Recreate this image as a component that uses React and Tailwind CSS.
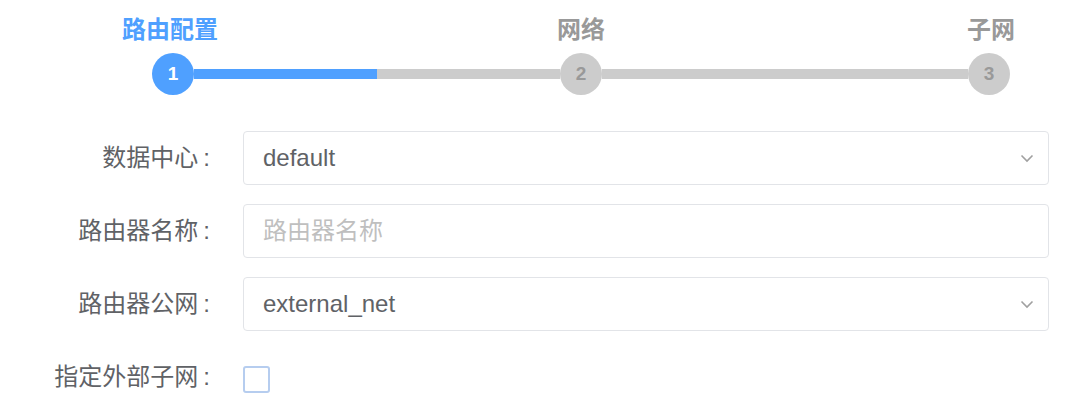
import React from "react";

const cjk = { fontFamily: '"Liberation Sans", "Noto Sans CJK SC", sans-serif' };

function Step({ label, num, active, shift }) {
  return (
    <div className="flex flex-col items-center w-[42px] shrink-0">
      <div
        className={
          "whitespace-nowrap text-[24px] leading-[24px] font-bold mb-[11px] " +
          shift +
          " " +
          (active ? "text-[#4fa0ff]" : "text-[#999999]")
        }
      >
        {label}
      </div>
      <div
        className={
          "w-[42px] h-[42px] rounded-full flex items-center justify-center text-[19px] font-bold " +
          (active ? "bg-[#4fa0ff] text-white" : "bg-[#cccccc] text-[#999999]")
        }
      >
        {num}
      </div>
    </div>
  );
}

function Chevron() {
  return (
    <svg width="14" height="9" viewBox="0 0 14 9" className="shrink-0">
      <polyline points="1.5,1.5 7,7 12.5,1.5" fill="none" stroke="#a0a0a0" strokeWidth="1.6" />
    </svg>
  );
}

function Label({ text }) {
  return (
    <div className="w-[243px] shrink-0 pr-[33px] flex justify-end items-center text-[24px] text-[#606266]">
      <span>{text}</span>
      <span className="ml-[5px]">:</span>
    </div>
  );
}

function Row({ label, children }) {
  return (
    <div className="flex items-center h-[54px]">
      <Label text={label} />
      {children}
    </div>
  );
}

function Box({ children }) {
  return (
    <div className="flex-1 h-[54px] border border-[#e2e4e8] rounded-[4px] bg-white flex items-center justify-between pl-[19px] pr-[14px] text-[24px]">
      {children}
    </div>
  );
}

export default function App() {
  return (
    <div className="w-[1092px] h-[420px] bg-white overflow-hidden" style={cjk}>
      <div className="pt-[18px] pl-[152px] w-[1010px]">
        <div className="flex items-end">
          <Step label="路由配置" num="1" active shift="-translate-x-[3px]" />
          <div className="flex-1 h-[10px] mb-[16px] bg-[#cccccc] flex">
            <div className="w-1/2 h-full bg-[#4fa0ff]" />
          </div>
          <Step label="网络" num="2" shift="" />
          <div className="flex-1 h-[10px] mb-[16px] bg-[#cccccc]" />
          <Step label="子网" num="3" shift="translate-x-[2px]" />
        </div>
      </div>

      <div className="mt-[36px] pr-[43px] flex flex-col gap-[19px]">
        <Row label="数据中心">
          <Box>
            <span className="text-[#606266]">default</span>
            <Chevron />
          </Box>
        </Row>
        <Row label="路由器名称">
          <Box>
            <span className="text-[#bfbfbf]">路由器名称</span>
          </Box>
        </Row>
        <Row label="路由器公网">
          <Box>
            <span className="text-[#606266]">external_net</span>
            <Chevron />
          </Box>
        </Row>
        <Row label="指定外部子网">
          <div className="w-[27px] h-[27px] mt-[4px] border-2 border-[#b6cdef] rounded-[3px] bg-white" />
        </Row>
      </div>
    </div>
  );
}
